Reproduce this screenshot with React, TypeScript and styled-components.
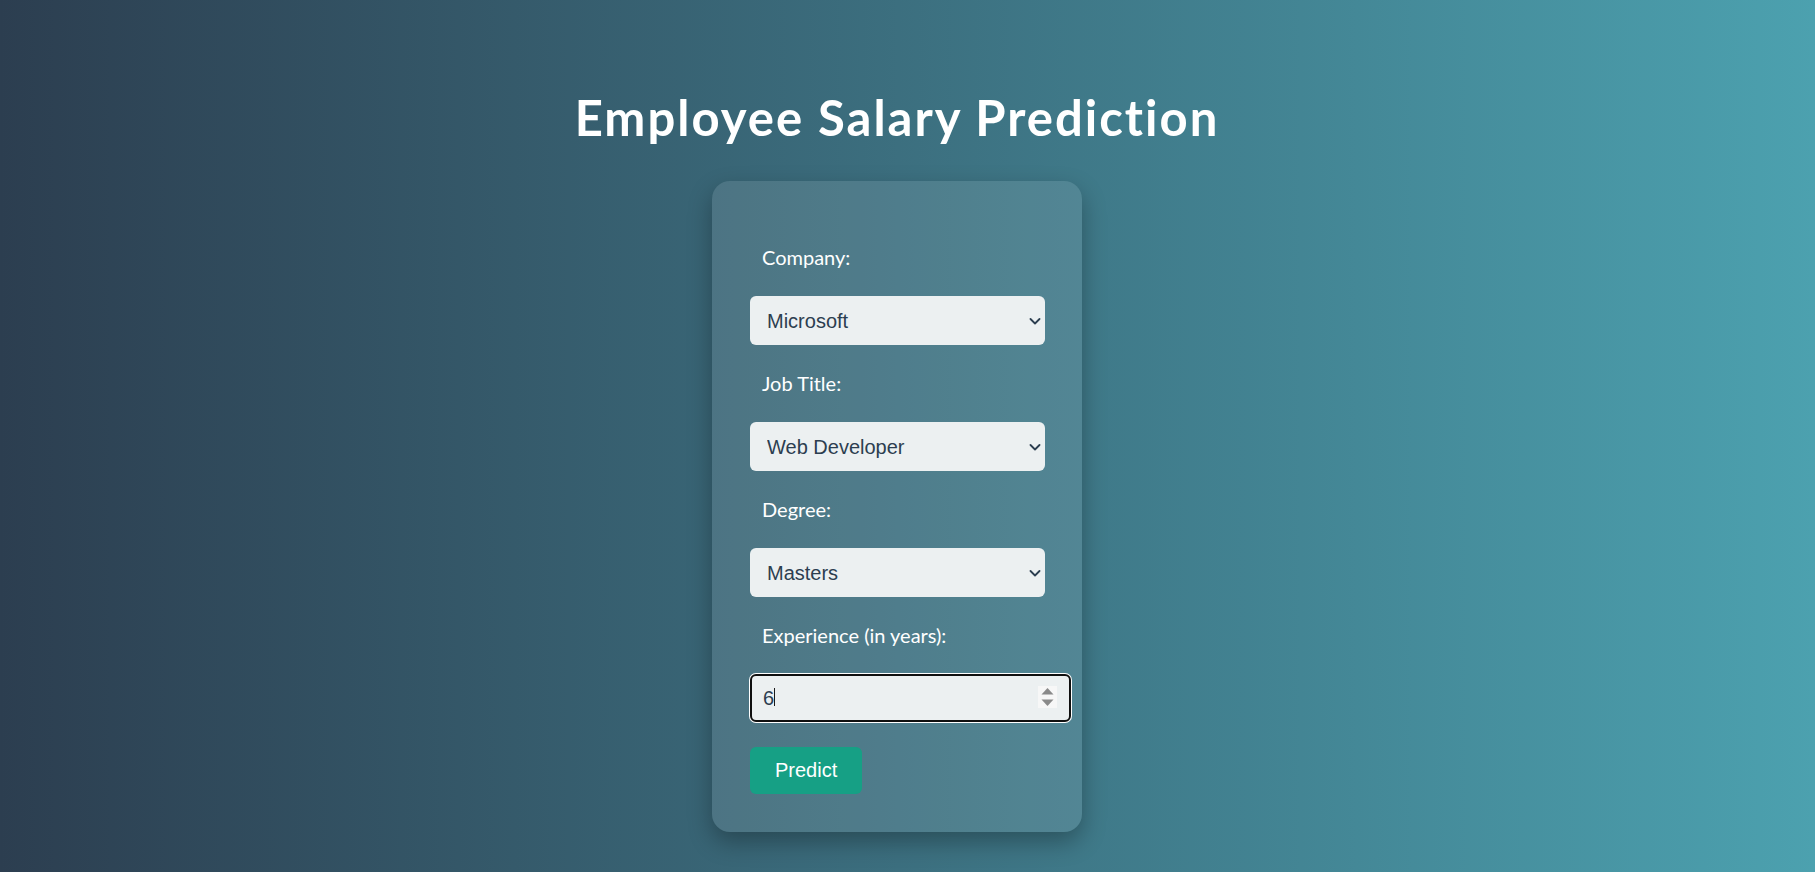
import React from "react";
import styled, { createGlobalStyle } from "styled-components";

const GlobalStyle = createGlobalStyle`
  html, body {
    margin: 0;
    padding: 0;
  }
  body {
    min-height: 100vh;
    background: linear-gradient(to right, #2c3e50, #4ca1af);
    font-family: "Lato", "Open Sans", sans-serif;
    color: #ffffff;
  }
  * {
    -webkit-font-smoothing: antialiased;
  }
`;

const Page = styled.main`
  min-height: 100vh;
  box-sizing: border-box;
  display: flex;
  flex-direction: column;
  align-items: center;
  padding: 85px 21px 40px 0;
`;

const Title = styled.h1`
  margin: 0 0 32px;
  font-family: "Lato", sans-serif;
  font-weight: 700;
  font-size: 49px;
  letter-spacing: 2px;
  line-height: 64px;
  color: #ffffff;
`;

const Card = styled.form`
  width: 295px;
  padding: 63px 37px 38px 38px;
  display: flex;
  flex-direction: column;
  gap: 25px;
  background: rgba(255, 255, 255, 0.1);
  border-radius: 18px;
  box-shadow: 0 10px 25px rgba(0, 0, 0, 0.3);
`;

const Label = styled.label`
  display: block;
  padding-left: 12px;
  font-family: "Lato", sans-serif;
  font-size: 20px;
  line-height: 27px;
  color: #ffffff;
`;

const SelectWrap = styled.div`
  position: relative;
  width: 100%;
`;

const Select = styled.select`
  display: block;
  width: 100%;
  height: 49px;
  box-sizing: border-box;
  appearance: none;
  -webkit-appearance: none;
  border: none;
  border-radius: 6px;
  padding: 0 30px 0 17px;
  background: #ecf0f1;
  color: #2c3e50;
  font-family: "Liberation Sans", Arial, sans-serif;
  font-size: 20px;
  outline: none;
`;

const Chevron = styled.svg`
  position: absolute;
  right: 4px;
  top: 50%;
  width: 12px;
  height: 7px;
  margin-top: -3px;
  pointer-events: none;
`;

const InputWrap = styled.div`
  position: relative;
  width: 321px;
`;

const NumberInput = styled.input`
  display: block;
  box-sizing: content-box;
  width: 295px;
  height: 44px;
  padding: 0 11px;
  border: 2px solid #101010;
  border-radius: 6px;
  box-shadow: 0 0 0 1px #ffffff;
  background: #ecf0f1;
  color: #2c3e50;
  font-family: "Liberation Sans", Arial, sans-serif;
  font-size: 20px;
  outline: none;
  -moz-appearance: textfield;
  &::-webkit-inner-spin-button,
  &::-webkit-outer-spin-button {
    -webkit-appearance: none;
    margin: 0;
  }
`;

const Caret = styled.span`
  position: absolute;
  left: 24px;
  top: 14px;
  width: 1px;
  height: 18px;
  background: #1a1a1a;
  pointer-events: none;
`;

const Spinner = styled.svg`
  position: absolute;
  right: 14px;
  top: 12px;
  width: 19px;
  height: 22px;
  background: #f7f7f7;
  pointer-events: none;
`;

const Button = styled.button`
  align-self: flex-start;
  border: none;
  border-radius: 6px;
  padding: 12px 25px;
  background: #16a085;
  color: #ffffff;
  font-family: "Liberation Sans", Arial, sans-serif;
  font-size: 20px;
  line-height: 23px;
  cursor: pointer;
`;

const ChevronIcon = () => (
  <Chevron viewBox="0 0 12 7">
    <polyline
      points="1.5,1 6,5.5 10.5,1"
      fill="none"
      stroke="#2c3e50"
      strokeWidth="1.8"
      strokeLinecap="round"
      strokeLinejoin="round"
    />
  </Chevron>
);

type FieldProps = {
  id: string;
  label: string;
  options: string[];
  value: string;
};

const SelectField = ({ id, label, options, value }: FieldProps) => (
  <>
    <Label htmlFor={id}>{label}</Label>
    <SelectWrap>
      <Select id={id} defaultValue={value}>
        {options.map((o) => (
          <option key={o} value={o}>
            {o}
          </option>
        ))}
      </Select>
      <ChevronIcon />
    </SelectWrap>
  </>
);

export default function App() {
  return (
    <>
      <GlobalStyle />
      <Page>
        <Title>Employee Salary Prediction</Title>
        <Card onSubmit={(e) => e.preventDefault()}>
          <SelectField
            id="company"
            label="Company:"
            value="Microsoft"
            options={["Google", "Microsoft", "Amazon", "Apple", "Meta"]}
          />
          <SelectField
            id="job"
            label="Job Title:"
            value="Web Developer"
            options={["Software Engineer", "Web Developer", "Data Scientist", "Manager"]}
          />
          <SelectField
            id="degree"
            label="Degree:"
            value="Masters"
            options={["Bachelors", "Masters", "PhD"]}
          />
          <Label htmlFor="experience">Experience (in years):</Label>
          <InputWrap>
            <NumberInput id="experience" type="number" defaultValue={6} />
            <Caret />
            <Spinner viewBox="0 0 19 22">
              <polygon points="3.5,8.5 15.5,8.5 9.5,2" fill="#8a8a8a" />
              <polygon points="3.5,13.5 15.5,13.5 9.5,20" fill="#8a8a8a" />
            </Spinner>
          </InputWrap>
          <Button type="submit">Predict</Button>
        </Card>
      </Page>
    </>
  );
}
